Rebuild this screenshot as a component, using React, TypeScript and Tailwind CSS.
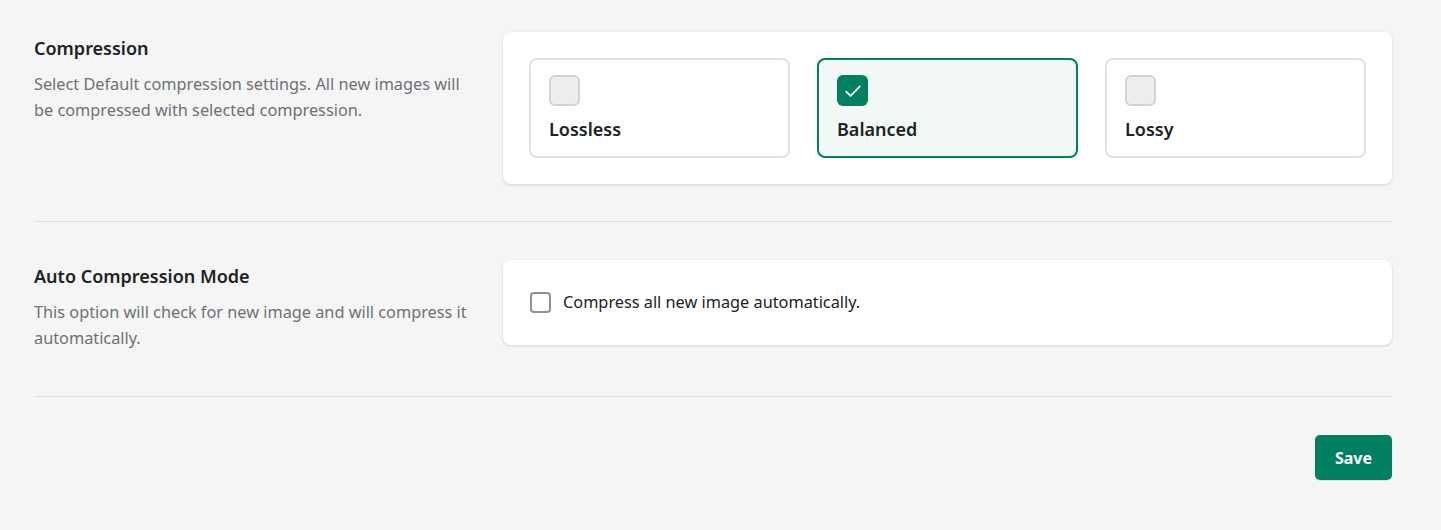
import { useState } from 'react';

const options = ['Lossless', 'Balanced', 'Lossy'];

const CheckIcon = () => (
  <svg width="22" height="22" viewBox="0 0 20 20" fill="none">
    <path d="M3.8 10.5l4 4L16.2 5.8" stroke="white" strokeWidth="1.6" strokeLinecap="round" strokeLinejoin="round" />
  </svg>
);

export default function App() {
  const [selected, setSelected] = useState('Balanced');
  const [auto, setAuto] = useState(false);

  return (
    <div className="min-h-[530px] bg-[#f5f5f5] pr-[49px] pl-[34px] pt-8 font-['Noto_Sans',sans-serif] text-[#202223]">
      <section className="flex gap-7 border-b border-[#e1e1e1] pb-[37px]">
        <div className="w-[441px] shrink-0 pt-[4px]">
          <h2 className="text-[18px] leading-6 font-semibold">Compression</h2>
          <p className="mt-[11px] text-[16.3px] leading-[26px] text-[#6d7175]">
            Select Default compression settings. All new images will be compressed with selected compression.
          </p>
        </div>
        <div className="grid flex-1 grid-cols-3 gap-[27px] rounded-lg bg-white p-[26px] shadow-[0_1px_3px_rgba(0,0,0,0.15)]">
          {options.map((opt) => {
            const active = opt === selected;
            return (
              <button
                key={opt}
                type="button"
                onClick={() => setSelected(opt)}
                className={`flex h-[100px] flex-col items-start rounded-lg border-2 px-[18px] pt-[15px] text-left ${
                  active ? 'border-[#008060] bg-[#f1f8f5]' : 'border-[#e1e1e1] bg-white'
                }`}
              >
                <span
                  className={`flex h-[31px] w-[31px] items-center justify-center rounded-md ${
                    active ? 'bg-[#008060]' : 'border-2 border-[#d2d2d2] bg-[#ededed]'
                  }`}
                >
                  {active && <CheckIcon />}
                </span>
                <span className="mt-[11px] text-[18px] leading-6 font-semibold">{opt}</span>
              </button>
            );
          })}
        </div>
      </section>

      <section className="flex gap-7 border-b border-[#e1e1e1] pt-[38px] pb-[45px]">
        <div className="w-[441px] shrink-0 pt-[4px]">
          <h2 className="text-[18px] leading-6 font-semibold">Auto Compression Mode</h2>
          <p className="mt-[11px] text-[16.3px] leading-[26px] text-[#6d7175]">
            This option will check for new image and will compress it automatically.
          </p>
        </div>
        <div className="flex h-[85px] flex-1 items-center self-start rounded-lg bg-white px-[27px] shadow-[0_1px_3px_rgba(0,0,0,0.15)]">
          <label className="flex cursor-pointer items-center gap-3">
            <span
              onClick={() => setAuto(!auto)}
              className={`flex h-[21px] w-[21px] items-center justify-center rounded-[4px] border-2 ${
                auto ? 'border-[#008060] bg-[#008060]' : 'border-[#8c9196] bg-white'
              }`}
            >
              {auto && <CheckIcon />}
            </span>
            <span className="text-[16.3px]">Compress all new image automatically.</span>
          </label>
        </div>
      </section>

      <div className="flex justify-end pt-[38px]">
        <button
          type="button"
          className="h-[45px] w-[77px] rounded-[5px] bg-[#008060] text-[16px] font-bold text-white shadow-[0_1px_0_rgba(0,0,0,0.08)]"
        >
          Save
        </button>
      </div>
    </div>
  );
}
